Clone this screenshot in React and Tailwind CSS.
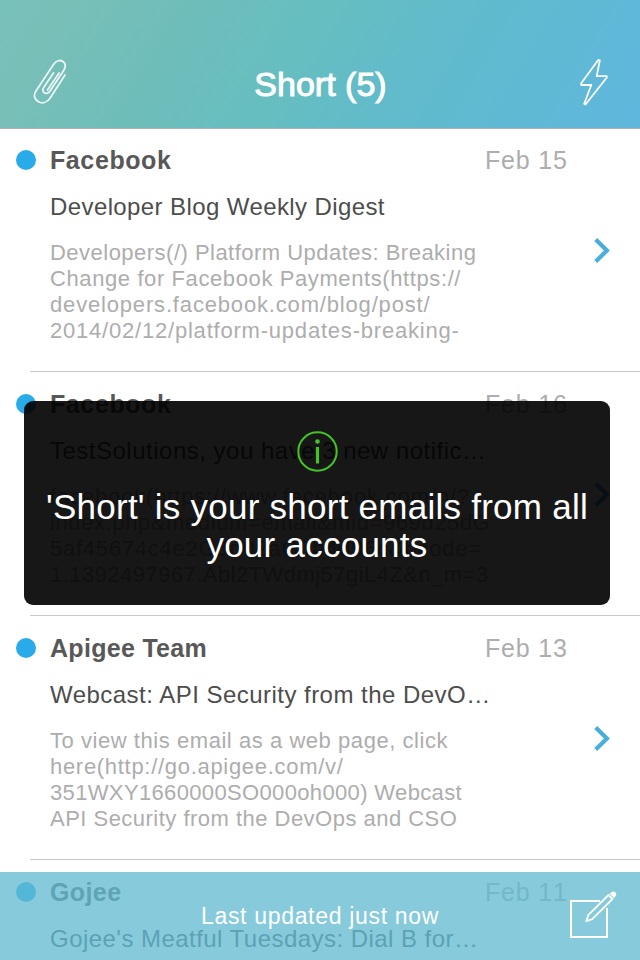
const emails = [
  {
    sender: ['Facebook', 'tracking-[0.6px]'],
    date: 'Feb 15',
    subject: ['Developer Blog Weekly Digest', 'tracking-[0.4px]'],
    body: [
      ['Developers(/) Platform Updates: Breaking', 'tracking-[0.48px]'],
      ['Change for Facebook Payments(https://', 'tracking-[0.6px]'],
      ['developers.facebook.com/blog/post/', 'tracking-[0.83px]'],
      ['2014/02/12/platform-updates-breaking-', 'tracking-[0.79px]'],
    ],
  },
  {
    sender: ['Facebook', 'tracking-[0.6px]'],
    date: 'Feb 16',
    subject: ['TestSolutions, you have 3 new notific…', 'tracking-[0.5px]'],
    body: [
      ['facebook(https://www.facebook.com/n/?', 'tracking-[0.84px]'],
      ['index.php&medium=email&mid=969d25dG', 'tracking-[0.6px]'],
      ['5af45674c4e2G5d02aG0b4d96c&bcode=', 'tracking-[0.76px]'],
      ['1.1392497967.Abl2TWdmj57giL4Z&n_m=3', 'tracking-[0.46px]'],
    ],
  },
  {
    sender: ['Apigee Team', 'tracking-[0.3px]'],
    date: 'Feb 13',
    subject: ['Webcast: API Security from the DevO…', 'tracking-[0.47px]'],
    body: [
      ['To view this email as a web page, click', 'tracking-[0.55px]'],
      ['here(http://go.apigee.com/v/', 'tracking-[0.7px]'],
      ['351WXY1660000SO000oh000) Webcast', 'tracking-[0.35px]'],
      ['API Security from the DevOps and CSO', 'tracking-[0.48px]'],
    ],
  },
  {
    sender: ['Gojee', 'tracking-[0.4px]'],
    date: 'Feb 11',
    subject: ["Gojee's Meatful Tuesdays: Dial B for…", 'tracking-[0.46px]'],
    body: [],
  },
];

function Paperclip() {
  return (
    <svg className="h-[46px] w-[34px]" viewBox="0 0 34 46" fill="none" stroke="white" strokeOpacity="0.85" strokeWidth="1.8" strokeLinecap="round">
      <path d="M32 16 17.5 38.5C14 44 9 45 5 42.5 1 40 .5 36 3 32L20.5 5.500C23 1.500 27 .5 30 2.500 33 4.500 32.500 8 31 11L17 32C15.500 34.500 13 35 11 33.500 9.500 32.500 9.500 30 11 28L20.500 14" />
      <path d="M26 14 14.500 31" />
    </svg>
  );
}

function Bolt() {
  return (
    <svg className="h-[48px] w-[30px]" viewBox="0 0 30 48" fill="none" stroke="white" strokeWidth="1.8" strokeLinejoin="round">
      <path d="M19.200 2 2.200 25.300V27H12.300L5.200 45.700 6.500 46.500 27.800 19.500V18.200H17.700L20.800 2.300Z" />
    </svg>
  );
}

function Compose() {
  return (
    <svg className="h-[48px] w-[48px]" viewBox="0 0 48 48" fill="none" stroke="white" strokeWidth="2">
      <path d="M31 10H2V46H38V17" />
      <path d="M17.300 30.200 19.200 24.200 39.500 4 43.500 8 23.200 28.200Z" strokeWidth="1.800" strokeLinejoin="round" />
      <path d="M41.700 2.800C43 1 45 1 46 2 47 3.100 46.700 4.700 45 6.100Z" fill="white" strokeWidth="1.400" />
    </svg>
  );
}

function Email({ email }) {
  return (
    <article className="flex h-[244px] shrink-0 flex-col pt-[18px]">
      <div className="flex h-7 items-center">
        <span className="ml-4 size-5 rounded-full bg-[#28abe8]" />
        <h2 className="ml-3.5 text-[25px] leading-7 font-bold text-[#585858]">
          <span className={email.sender[1]}>{email.sender[0]}</span>
        </h2>
        <time className="mr-[72px] ml-auto w-[83px] text-[25px] leading-7 tracking-[0.8px] whitespace-nowrap text-[#adadad] [font-kerning:none]">{email.date}</time>
      </div>
      <div className="flex grow">
        <div className="ml-[50px] grow whitespace-nowrap">
          <h3 className="mt-[19px] text-[24px] leading-7 text-[#4d4d4d]">
            <span className={email.subject[1]}>{email.subject[0]}</span>
          </h3>
          <div className="mt-[19px] text-[22px] leading-[26px] text-[#adadad]">
            {email.body.map(([text, tracking]) => (
              <p key={text} className={tracking}>{text}</p>
            ))}
          </div>
        </div>
        <svg className="mt-[63px] mr-[29px] h-[27px] w-[18px] shrink-0" viewBox="0 0 18 27" fill="none" stroke="#4aaedc" strokeWidth="4.2">
          <path d="M2.700 2.500 13.900 13.500 2.700 24.500" />
        </svg>
      </div>
      <div className="ml-[30px] h-px shrink-0 bg-[#c8c7cc]" />
    </article>
  );
}

export default function App() {
  return (
    <main className="relative flex h-[960px] w-[640px] flex-col overflow-hidden bg-white font-['Liberation_Sans',Arial,sans-serif]">
      <header className="z-10 -mb-px flex h-[129px] shrink-0 items-end justify-between border-b border-[#b2b2b2] bg-[linear-gradient(120deg,#78c0ba_0%,#78bfb8_10%,#6ebdba_28%,#66bec0_46%,#61bbca_62%,#5fb9d4_82%,#5fb7de_100%)] pr-[31px] pl-[33px]">
        <div className="mb-[23px]"><Paperclip /></div>
        <h1 className="mr-[5px] mb-6 text-[34px] leading-10 text-white [-webkit-text-stroke:1px_white]">Short (5)</h1>
        <div className="mb-[22px]"><Bolt /></div>
      </header>

      {emails.map((email, i) => (
        <Email key={i} email={email} />
      ))}

      <div className="absolute top-[401px] left-6 flex h-[203.500px] w-[586px] flex-col items-center rounded-[9px] bg-black/91 pt-[30px] text-white">
        <svg className="size-[41px]" viewBox="0 0 41 41" fill="none" stroke="#43c424" strokeWidth="2">
          <circle cx="20.500" cy="20.500" r="19.200" />
          <path d="M20.500 16V32.500" strokeWidth="3.200" />
          <circle cx="20.500" cy="10.500" r="2.300" fill="#43c424" stroke="none" />
        </svg>
        <p className="mt-4 text-center text-[35px] leading-[38px] tracking-[0.25px] whitespace-nowrap">
          'Short' is your short emails from all<br />your accounts
        </p>
      </div>

      <footer className="absolute bottom-0 left-0 flex h-[88px] w-full items-center justify-center bg-[rgb(98_186_210/0.77)]">
        <p className="text-[23px] tracking-[0.68px] text-white">Last updated just now</p>
        <div className="absolute top-[19px] right-[23px]"><Compose /></div>
      </footer>
    </main>
  );
}
